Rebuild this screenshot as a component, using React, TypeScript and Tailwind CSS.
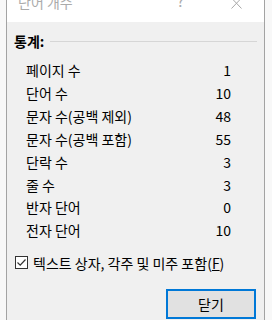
const rows: [string, string][] = [
  ["페이지 수", "1"],
  ["단어 수", "10"],
  ["문자 수(공백 제외)", "48"],
  ["문자 수(공백 포함)", "55"],
  ["단락 수", "3"],
  ["줄 수", "3"],
  ["반자 단어", "0"],
  ["전자 단어", "10"],
];

export default function App() {
  return (
    <div
      className="w-[272px] h-[320px] overflow-hidden flex bg-[#f8f8f8] text-black"
      style={{ fontFamily: '"Noto Sans CJK KR", "Noto Sans", sans-serif' }}
    >
      <div className="w-[6px] shrink-0" />
      <div className="w-[259px] shrink-0 flex flex-col bg-[#f0f0f0] border-x border-[#a3a3a3]">
        {/* title bar */}
        <div className="h-[22px] bg-white flex items-start overflow-hidden text-[#ababab] text-[14px] leading-[20px]">
          <span className="ml-[11px] mt-[-8px]">단어 개수</span>
          <span className="ml-auto mt-[-9px] text-[15px]">?</span>
          <svg className="ml-[47px] mr-[22px] mt-[-1px]" width="11" height="10" viewBox="0 0 11 10">
            <path d="M0.5 -1 L10.5 9.5 M10.5 -1 L0.5 9.5" stroke="#a8a8a8" strokeWidth="1" fill="none" />
          </svg>
        </div>

        {/* statistics header */}
        <div className="mt-[8px] h-[23px] pl-[7px] pr-[7px] flex items-center gap-[6px]">
          <span className="text-[14px] font-bold leading-[23px]">통계:</span>
          <div className="flex-1 h-px bg-[#d6d6d6]" />
        </div>

        {/* rows */}
        <div className="mt-[6px] pl-[19px] pr-[33px] flex flex-col">
          {rows.map(([label, value]) => (
            <div key={label} className="h-[22.85px] flex items-center justify-between text-[14px] leading-[22px]">
              <span>{label}</span>
              <span>{value}</span>
            </div>
          ))}
        </div>

        {/* checkbox */}
        <div className="mt-[11px] h-[20px] pl-[8px] flex items-center gap-[4px] text-[14px] leading-[20px]">
          <div className="w-[13px] h-[13px] border border-[#333333] bg-white flex items-center justify-center shrink-0">
            <svg width="11" height="11" viewBox="0 0 11 11">
              <path d="M1.5 5.5 L4.2 8.2 L9.5 2.5" stroke="#333333" strokeWidth="1.2" fill="none" />
            </svg>
          </div>
          <span className="ml-[1px]">
            텍스트 상자, 각주 및 미주 포함(<span className="underline">F</span>)
          </span>
        </div>

        {/* button */}
        <div className="mt-[16px] pr-[8px] flex justify-end">
          <button className="w-[90px] h-[30px] bg-[#e1e1e1] border-2 border-[#0078d7] text-[14px] leading-[20px]">
            닫기
          </button>
        </div>
      </div>
    </div>
  );
}
